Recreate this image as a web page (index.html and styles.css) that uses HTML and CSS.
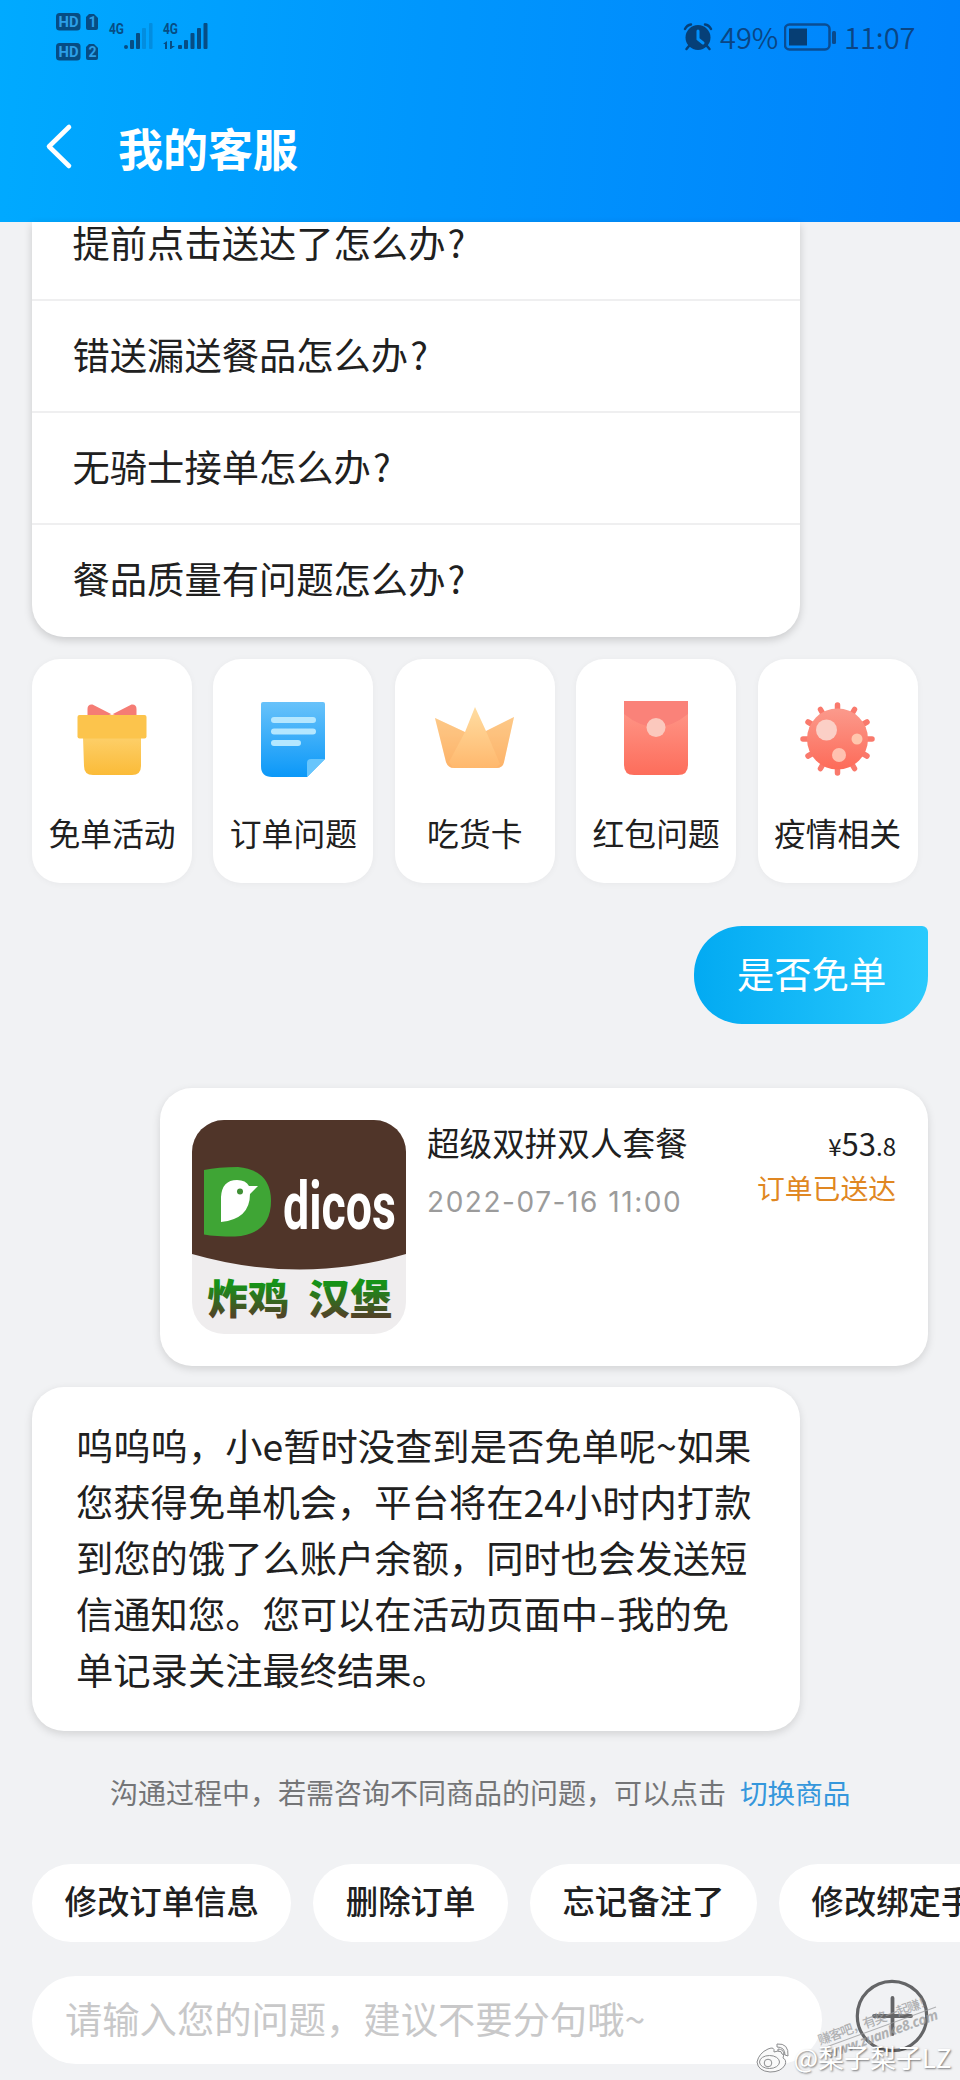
FILE: index.html
```html
<!DOCTYPE html>
<html lang="zh-CN">
<head>
<meta charset="utf-8">
<title>我的客服</title>
<link rel="stylesheet" href="styles.css">
</head>
<body>
<div class="screen">
  <header class="header">
    <div class="status">
      <svg class="status-left" width="156" height="52" viewBox="56 12 156 52">
        <g fill="#064d84">
          <rect x="56" y="13" width="24.500" height="17.500" rx="3.500"/>
          <path d="M89 14h5l4 4v10q0 2-2 2h-8q-2 0-2-2V17z"/>
          <rect x="56" y="43" width="24.500" height="17.500" rx="3.500"/>
          <path d="M89 44h5l4 4v10q0 2-2 2h-8q-2 0-2-2V47z"/>
          <circle cx="126" cy="47" r="2"/>
          <rect x="130" y="40" width="4" height="9" rx="1"/>
          <rect x="136" y="33" width="4" height="16" rx="1"/>
          <rect x="142" y="28" width="4" height="21" rx="1" opacity=".25"/>
          <rect x="149" y="23" width="3.500" height="26" rx="1" opacity=".25"/>
          <rect x="178" y="45" width="4" height="4" rx="1"/>
          <rect x="184" y="40" width="4" height="9" rx="1"/>
          <rect x="190.500" y="33" width="4" height="16" rx="1"/>
          <rect x="197" y="28" width="4" height="21" rx="1"/>
          <rect x="203.500" y="23" width="4" height="26" rx="1"/>
          <path d="M167 41v8h-2v-5h-2zM170 41h2v5h3l-4 3h-1z"/>
        </g>
        <g class="status-tiny">
          <text x="58.500" y="26.500" textLength="20" lengthAdjust="spacingAndGlyphs" fill="#2b9fe8">HD</text>
          <text x="88.500" y="26.500" fill="#2b9fe8">1</text>
          <text x="58.500" y="56.500" textLength="20" lengthAdjust="spacingAndGlyphs" fill="#2b9fe8">HD</text>
          <text x="88.500" y="57" fill="#2b9fe8">2</text>
          <text x="109" y="34" textLength="15" lengthAdjust="spacingAndGlyphs" fill="#064d84">4G</text>
          <text x="163" y="34" textLength="15" lengthAdjust="spacingAndGlyphs" fill="#064d84">4G</text>
        </g>
      </svg>
      <div class="status-right">
        <svg width="30" height="28" viewBox="683 22 30 28">
          <circle cx="698" cy="36.500" r="12.500" fill="#064078"/>
          <path d="M685 28q2-4 6-4.500M711 28q-2-4-6-4.500M689 45l-2.500 3M707 45l2.500 3" fill="none" stroke="#064078" stroke-width="2.500" stroke-linecap="round"/>
          <path d="M698 30v8l5 4" fill="none" stroke="#0090fb" stroke-width="3" stroke-linecap="round"/>
        </svg>
        <span class="pct">49%</span>
        <svg class="battery" width="53" height="28" viewBox="0 0 53 28">
          <rect x="1" y="1.500" width="44.500" height="25" rx="4.500" fill="none" stroke="#0a4d93" stroke-width="2.500"/>
          <rect x="5" y="5.500" width="18" height="17" fill="#063e74"/>
          <rect x="48" y="8" width="4" height="13" rx="1.500" fill="#0a4a8c"/>
        </svg>
        <span class="time">11:07</span>
      </div>
    </div>
    <div class="nav">
      <svg class="back" width="28" height="48" viewBox="0 0 28 48"><path d="M24 4 4 23.500 24 43" fill="none" stroke="#fff" stroke-width="4.600" stroke-linecap="round" stroke-linejoin="round"/></svg>
      <h1 class="title">我的客服</h1>
    </div>
  </header>

  <main class="chat">
    <ul class="faq">
      <li>提前点击送达了怎么办<span class="mark">?</span></li>
      <li>错送漏送餐品怎么办<span class="mark">?</span></li>
      <li>无骑士接单怎么办<span class="mark">?</span></li>
      <li>餐品质量有问题怎么办<span class="mark">?</span></li>
    </ul>

    <div class="tiles">
      <div class="tile">
        <svg width="80" height="80" viewBox="0 0 80 80">
          <defs><linearGradient id="gift" x2="0" y2="1"><stop offset="0" stop-color="#fdcf69"/><stop offset="1" stop-color="#fbbb38"/></linearGradient></defs>
          <path d="M15.500 16V9q0-5 5-4.500L40 14.500 59.500 4.500q5-.5 5 4.500v7z" fill="#f57c74"/>
          <path d="M34 16 40 14 46 16z" fill="#fff"/>
          <path d="M11 37h58v29q0 9-9 9H21q-9 0-9-9z" fill="url(#gift)"/>
          <rect x="5.500" y="15" width="69" height="23.500" rx="2" fill="#fcc44c"/>
        </svg>
        <span>免单活动</span>
      </div>
      <div class="tile">
        <svg width="80" height="80" viewBox="0 0 80 80">
          <defs><linearGradient id="doc" x2="0" y2="1"><stop offset="0" stop-color="#68c2fa"/><stop offset="1" stop-color="#0b98f8"/></linearGradient></defs>
          <path d="M10 2h60q2 0 2 2v55L54 77H19Q8 77 8 66V4q0-2 2-2z" fill="url(#doc)"/>
          <path d="M72 59 54 77V63q0-4 4-4z" fill="#67c5fc"/>
          <path d="M21 20h39M21 31.500h39M21 43h24" stroke="#b4e7ff" stroke-width="6" stroke-linecap="round"/>
        </svg>
        <span>订单问题</span>
      </div>
      <div class="tile">
        <svg width="80" height="80" viewBox="0 0 80 80">
          <defs><linearGradient id="crown" x2="0" y2="1"><stop offset="0" stop-color="#ffdda2"/><stop offset="1" stop-color="#ffb86d"/></linearGradient></defs>
          <path d="M0 18 30 32 40 7 51 31 79 17 69 62q-1 6-8 6H19q-6 0-8-6z" fill="url(#crown)"/>
          <path d="M0 18 30 32 14 62 18 68q-5-1-7-6zM79 17 51 31 65 64 61 68q7 0 8-6z" fill="#f9a45c" opacity=".28"/>
        </svg>
        <span>吃货卡</span>
      </div>
      <div class="tile">
        <svg width="80" height="80" viewBox="0 0 80 80">
          <defs><linearGradient id="env" x2="0" y2="1"><stop offset="0" stop-color="#ff9b8d"/><stop offset="1" stop-color="#fd6d5b"/></linearGradient></defs>
          <path d="M8 1h64v64q0 10-10 10H18Q8 75 8 65z" fill="url(#env)"/>
          <path d="M8 1h64v13Q40 40 8 14z" fill="#fa8279"/>
          <circle cx="40" cy="27.500" r="9.500" fill="#fbc8bd"/>
        </svg>
        <span>红包问题</span>
      </div>
      <div class="tile">
        <svg width="80" height="80" viewBox="0 0 80 80">
          <defs><linearGradient id="virus" x2="0" y2="1"><stop offset="0" stop-color="#fb9a8c"/><stop offset="1" stop-color="#fd6b59"/></linearGradient></defs>
          <g fill="none" stroke="#f9796c" stroke-width="5.500" stroke-linecap="round">
            <path d="M39.500 5v68M5 39h69M22.500 9.500l34 59M56.500 9.500l-34 59M10 22l59 34M69 22 10 56"/>
          </g>
          <circle cx="39.500" cy="39" r="30.500" fill="url(#virus)"/>
          <circle cx="28.500" cy="30" r="10.500" fill="#fbcfc6"/>
          <circle cx="59" cy="39" r="5.500" fill="#ffc6ad"/>
          <circle cx="41" cy="55" r="7" fill="#ffc1b0"/>
        </svg>
        <span>疫情相关</span>
      </div>
    </div>

    <div class="bubble">是否免单</div>

    <section class="order">
      <svg class="logo" width="214" height="214" viewBox="0 0 214 214">
        <defs><linearGradient id="sign" gradientUnits="userSpaceOnUse" x1="0" y1="160" x2="0" y2="198"><stop offset=".1" stop-color="#169318"/><stop offset=".95" stop-color="#514327"/></linearGradient></defs>
        <rect width="214" height="214" fill="#efedee"/>
        <path d="M0 0h214v134q-106 31-214 0z" fill="#503529"/>
        <path d="M12 50q14-3 34-3 33 3 33 34 0 33-36 35.500-20 0-31-2z" fill="#3fa535"/>
        <path d="M29 102V77q1-17 16-17 9 0 12 6h9l-8 8q0 25-29 28z" fill="#fff"/>
        <circle cx="48" cy="71.500" r="3" fill="#3f8f35"/>
        <text class="brand" x="91" y="108.500" textLength="113" lengthAdjust="spacingAndGlyphs">dicos</text>
        <text class="sign" x="15" y="194" textLength="82" lengthAdjust="spacingAndGlyphs" fill="url(#sign)">炸鸡</text>
        <text class="sign" x="116" y="194" textLength="84" lengthAdjust="spacingAndGlyphs" fill="url(#sign)">汉堡</text>
      </svg>
      <div class="order-info">
        <div class="order-name">超级双拼双人套餐</div>
        <div class="order-date">2022-07-16 11:00</div>
      </div>
      <div class="order-side">
        <div class="price"><small>¥</small>53<small>.8</small></div>
        <div class="order-state">订单已送达</div>
      </div>
    </section>

    <p class="reply">呜呜呜，小e暂时没查到是否免单呢~如果<br>您获得免单机会，平台将在24小时内打款<br>到您的饿了么账户余额，同时也会发送短<br>信通知您。您可以在活动页面中<span class="dash">-</span>我的免<br>单记录关注最终结果。</p>

    <div class="tip">沟通过程中，若需咨询不同商品的问题，可以点击<a class="switch">切换商品</a></div>
  </main>

  <footer class="footer">
    <div class="chips">
      <span class="chip">修改订单信息</span>
      <span class="chip">删除订单</span>
      <span class="chip">忘记备注了</span>
      <span class="chip">修改绑定手机号</span>
    </div>
    <div class="composer">
      <div class="input">请输入您的问题，建议不要分句哦~</div>
      <svg class="plus" width="74" height="74" viewBox="0 0 74 74"><g fill="none" stroke="#646567" stroke-linecap="round"><circle cx="37" cy="37" r="34.700" stroke-width="3.200"/><path d="M37.500 19v36M19 37h37" stroke-width="3.800"/></g></svg>
    </div>
  </footer>

  <svg class="watermark" width="180" height="100" viewBox="780 1980 180 100">
    <g transform="translate(820 2045) rotate(-20)" fill="#9a9b9d" opacity=".75">
      <text class="wm-small" x="0" y="0" textLength="120">赚客吧，有奖一起赚！</text>
      <path d="M0 4h122" stroke="#9a9b9d" stroke-width="1"/>
      <text class="wm-url" x="4" y="16" textLength="117">www.zuanke8.com</text>
    </g>
    <text class="wm-handle" x="793.500" y="2067.500" textLength="158" fill="#fff">@梨子梨子LZ</text>
  </svg>
  <svg class="weibo" width="38" height="32" viewBox="0 0 38 32">
    <g fill="#fafafa" stroke="#8c8d8f" stroke-width="1">
      <path d="M2 20Q4 11 13 7q7-3 6 3 9-3 10 2l-1 4q4 2 2 7-4 7-15 7Q3 29 2 20z"/>
      <ellipse cx="14.500" cy="20" rx="10" ry="6.500"/>
      <circle cx="13" cy="21" r="3.800"/>
      <path d="M22 2q12-1 11 12l-3-1q0-8-8-8zM23 7q6 0 6 6l-2-1q0-3-4-3z"/>
    </g>
  </svg>
</div>
</body>
</html>
```
FILE: styles.css
```css
* { box-sizing: border-box; margin: 0; padding: 0; }
body {
  width: 960px;
  background: #f1f2f4;
  font-family: "Noto Sans CJK SC", sans-serif;
  color: #202020;
}
svg { display: block; flex: none; }
.screen {
  position: relative;
  width: 960px;
  height: 2080px;
  overflow: hidden;
  display: flex;
  flex-direction: column;
  white-space: nowrap;
}

/* Header */
.header {
  height: 222px;
  flex: none;
  background: linear-gradient(95deg, #00aaff 0%, #0096fd 45%, #0082fc 100%);
}
.status {
  display: flex;
  justify-content: space-between;
  padding: 12px 45px 0 56px;
  height: 104px;
}
.status-tiny { font: 700 14px Roboto, sans-serif; }
.status-right {
  display: flex;
  align-items: center;
  height: 50px;
  color: #0a4584;
  font-size: 29px;
  line-height: 50px;
  font-weight: 350;
}
.status-right span { position: relative; top: -1px; }
.pct { margin-left: 7px; width: 64px; }
.battery { margin-right: 7px; }
.time { width: 71px; }
.nav { display: flex; align-items: center; height: 86px; padding-left: 45px; }
.title {
  margin-left: 45px;
  padding-top: 1px;
  color: #fff;
  font-size: 45px;
  line-height: 66px;
  font-weight: 700;
}

/* Chat */
.chat { flex: none; height: 1620px; display: flex; flex-direction: column; }
.faq {
  flex: none;
  list-style: none;
  width: 768px;
  margin-left: 32px;
  background: #fff;
  border-radius: 0 0 32px 32px;
  box-shadow: 0 3px 8px rgba(0, 0, 0, .17);
}
.faq li {
  height: 112px;
  padding: 29px 0 0 40.500px;
  border-bottom: 2.500px solid #efeff0;
  font-size: 37.300px;
  line-height: 48px;
}
.faq li:first-child { height: 79px; padding-top: 0; line-height: 40px; }
.faq li:last-child { border-bottom: 0; }
.mark { margin-left: 2px; }

.tiles {
  display: grid;
  grid-template-columns: repeat(5, 160px);
  column-gap: 21.400px;
  margin: 22px 0 0 32px;
}
.tile {
  height: 224px;
  display: flex;
  flex-direction: column;
  align-items: center;
  padding-top: 41px;
  background: #fff;
  border-radius: 28px;
  font-size: 31.800px;
  line-height: 44px;
  box-shadow: 0 1px 7px rgba(0, 0, 0, .045);
}
.tile span { margin-top: 30px; }

.bubble {
  align-self: flex-end;
  margin: 43px 32px 0 0;
  width: 234px;
  height: 98px;
  padding-left: 43px;
  border-radius: 48px 6px 48px 48px;
  background: linear-gradient(90deg, #02aaf2, #2acafd);
  color: #fff;
  font-size: 37.300px;
  line-height: 94px;
}

.order {
  display: flex;
  align-self: flex-end;
  width: 768px;
  height: 278px;
  margin: 64px 32px 0 0;
  padding: 32px 32px 0;
  background: #fff;
  border-radius: 32px;
  box-shadow: 0 3px 8px rgba(0, 0, 0, .13);
}
.logo { border-radius: 32px; }
.brand { font: 700 66px Roboto, sans-serif; fill: #fff; }
.sign { font: 900 41px "Noto Sans CJK SC", sans-serif; }
.order-info { margin-left: 21px; }
.order-name { font-size: 32.600px; line-height: 44px; }
.order-date {
  margin-top: 16px;
  color: #9b9b9b;
  font: 400 28px/44px Inter, sans-serif;
  letter-spacing: 1.550px;
}
.order-side { margin-left: auto; text-align: right; }
.price { font-size: 31px; line-height: 46px; }
.price small { font-size: 24px; }
.order-state { color: #e08722; font-size: 27.800px; line-height: 36px; }

.reply {
  width: 768px;
  height: 344px;
  margin: 21px 0 0 32px;
  padding: 30px 0 0 44px;
  background: #fff;
  border-radius: 32px;
  box-shadow: 0 3px 8px rgba(0, 0, 0, .13);
  font-size: 37.300px;
  line-height: 56px;
}
.dash { display: inline-block; width: 19px; text-align: center; transform: scaleX(1.3); }
.tip {
  margin: 41px 0 0 110px;
  color: #747577;
  font-size: 28px;
  line-height: 40px;
}
.switch { margin-left: 14px; color: #3597dc; font-size: 27.600px; }

/* Footer */
.footer { padding: 22px 0 0 32px; }
.chips { display: flex; gap: 22px; }
.chip {
  flex: none;
  height: 78px;
  padding: 0 32.500px;
  background: #fff;
  border-radius: 39px;
  font-size: 32.400px;
  line-height: 72px;
  font-weight: 500;
}
.composer { display: flex; margin-top: 34px; }
.input {
  width: 790px;
  height: 88px;
  padding-left: 33px;
  background: #fff;
  border-radius: 44px;
  color: #c8c8c9;
  font-size: 37.300px;
  line-height: 84px;
}
.plus { margin: 3px 0 0 33px; }

/* Overlaid marks */
.watermark { position: absolute; left: 780px; top: 1980px; }
.weibo { position: absolute; left: 755px; top: 2042px; }
.wm-small { font-size: 13px; font-weight: 500; }
.wm-url { font: italic 700 14px "Noto Sans", sans-serif; }
.wm-handle { font-size: 26px; text-shadow: 1px 1.500px 2px rgba(0, 0, 0, .5); }
```
